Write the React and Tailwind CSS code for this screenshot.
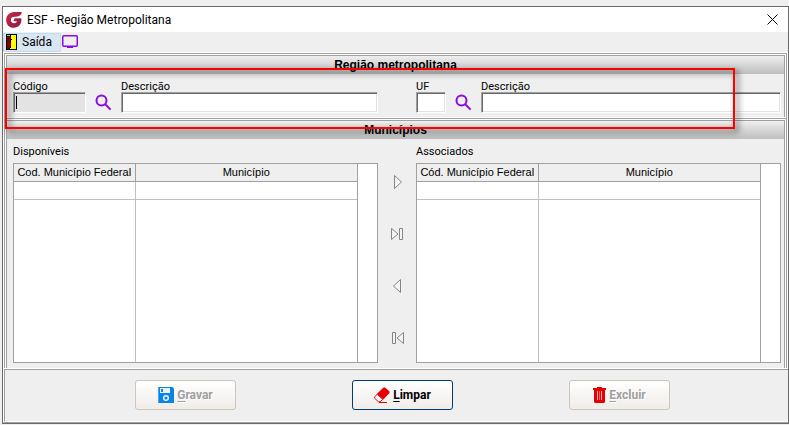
import { useState } from "react";

const fieldClass =
  "h-[21px] min-w-0 border border-t-[#a0a0a0] border-l-[#a0a0a0] border-r-white border-b-white px-1 text-[11px] shadow-[inset_1px_1px_#696969,inset_-1px_-1px_#e3e3e3] outline-none";

const LogoIcon = () => (
  <svg width="16" height="16" viewBox="0 0 16 16" aria-hidden="true">
    <defs>
      <linearGradient id="logo" x1="0" y1="0" x2="1" y2="1">
        <stop offset="0" stopColor="#c8284a" />
        <stop offset="1" stopColor="#8c1a3c" />
      </linearGradient>
    </defs>
    <path
      d="M15.8 0C13 0.1 10 0 8 0.1C3.4 0.3 0.2 3.6 0.2 8C0.2 12.7 3.2 15.8 7.6 15.8C12.4 15.8 15.4 12.6 15.4 7.6V6.2H8.6L7.4 9.2H11C10.6 10.4 9.6 11.2 8 11.2C6.1 11.2 4.9 9.9 4.9 8C4.9 5.8 6.2 4.8 8.6 4.7C12.2 4.6 15.4 4 15.8 0Z"
      fill="url(#logo)"
    />
  </svg>
);

const DoorIcon = () => (
  <svg width="11" height="16" viewBox="0 0 11 16" shapeRendering="crispEdges" aria-hidden="true">
    <path d="M0 0H11V16H0Z" fill="#000" />
    <path d="M5 1H10V15H4V14H5Z" fill="#ff0" />
    <path d="M1 2H4V3H5V12H4V14H3V15H1Z" fill="#800000" />
    <path d="M4 5H6V6H5V9H4Z" fill="#000" />
    <path d="M2 1H4V2H2ZM1 1H2V2H1Z" fill="#0ff" />
  </svg>
);

const MonitorIcon = () => (
  <svg width="16" height="14" viewBox="0 0 16 14" aria-hidden="true">
    <rect x="0.75" y="0.75" width="14.5" height="10.5" rx="1" fill="none" stroke="#8a0be0" strokeWidth="1.5" />
    <path d="M5 11H11V13H5Z" fill="#8a0be0" />
  </svg>
);

const SearchIcon = () => (
  <svg width="17" height="17" viewBox="0 0 17 17" fill="none" stroke="#8a0be0" strokeWidth="2" aria-hidden="true">
    <circle cx="6.5" cy="6.5" r="5" />
    <path d="M10.2 10.2L15.6 15.6" />
  </svg>
);

const SaveIcon = () => (
  <svg width="16" height="16" viewBox="0 0 16 16" aria-hidden="true">
    <path d="M0 0H14.5L16 1.5V16H0Z" fill="#0883e6" />
    <path d="M2 1H12V6H2Z" fill="#e8f3fc" />
    <path d="M3 2H5V5H3Z" fill="#0883e6" />
    <circle cx="8" cy="11" r="2.3" fill="#0883e6" stroke="#e8f3fc" strokeWidth="1.5" />
    <path d="M0.5 0V16" stroke="#4aa6ee" />
  </svg>
);

const EraserIcon = () => (
  <svg width="16" height="16" viewBox="0 0 16 16" aria-hidden="true">
    <path d="M9.5 0.5H11L15.5 4.5V6L9.3 12.4L3 6.7Z" fill="#e60000" />
    <path d="M3.2 7.3L0.7 9.7V11.2L4.4 14.8H6L8.7 12.4Z" fill="#fff" stroke="#e60000" />
    <path d="M5 15.5H13" stroke="#e60000" />
  </svg>
);

const TrashIcon = () => (
  <svg width="13" height="16" viewBox="0 0 13 16" aria-hidden="true">
    <path d="M0 1H4V0H9V1H13V3H12V15L11 16H2L1 15V3H0Z" fill="#e60000" />
    <path d="M4.5 4V13M8.5 4V13" stroke="#f7b5b5" strokeWidth="1" />
    <path d="M6.5 4V13" stroke="#e66060" strokeWidth="1" />
  </svg>
);

const arrows = [
  { label: "Associar", shapes: ["M3.5 1.5V14.5L10.5 8Z"] },
  { label: "Associar todos", shapes: ["M0.5 2.5V13.5L7 8Z", "M8.5 2.5H11.5V13.5H8.5Z"] },
  { label: "Desassociar", shapes: ["M9.5 1.5V14.5L2.5 8Z"] },
  { label: "Desassociar todos", shapes: ["M12.5 2.5V13.5L6 8Z", "M1.5 2.5H4.5V13.5H1.5Z"] },
];

const SectionHeader = ({ children }) => (
  <h2 className="h-[18px] bg-linear-to-b from-[#efefef] to-[#bebebe] text-center font-['Liberation_Sans',sans-serif] text-xs leading-[18px] font-bold">
    {children}
  </h2>
);

const CityTable = ({ caption, codeLabel }) => (
  <section className="flex min-w-0 flex-col">
    <h3 className="h-6 text-[11px] leading-[26px]">{caption}</h3>
    <div className="flex flex-1 border border-[#a0a0a0] bg-white">
      <table
        aria-label={caption}
        className="h-full flex-1 table-fixed border-collapse font-['Liberation_Sans',sans-serif] text-[11px] leading-4"
      >
        <thead>
          <tr className="h-[17px] bg-[#efefef]">
            <th className="w-[121px] border-r border-b border-[#a0a0a0] p-0 font-normal whitespace-nowrap">
              {codeLabel}
            </th>
            <th className="border-b border-[#a0a0a0] p-0 font-normal">Município</th>
          </tr>
        </thead>
        <tbody>
          <tr className="h-[18px]">
            <td className="border-r border-b border-[#c0c0c0] p-0" />
            <td className="border-b border-[#c0c0c0] p-0" />
          </tr>
          <tr>
            <td className="border-r border-[#c0c0c0] p-0" />
            <td className="p-0" />
          </tr>
        </tbody>
      </table>
      <div className="w-5 border-l border-[#a0a0a0]" />
    </div>
  </section>
);

const ActionButton = ({ icon, label, disabled }) => (
  <button
    type="button"
    disabled={disabled}
    className={`flex h-[30px] w-[101px] items-center justify-center gap-[3px] rounded-[3px] border bg-linear-to-b from-white to-[#f0ece8] text-xs font-bold ${
      disabled
        ? "border-[#cbc5ba] text-[#a0a0a0] [text-shadow:1px_1px_#fff]"
        : "border-[#003c74] text-black"
    }`}
  >
    {icon}
    <span>
      <span className="underline underline-offset-2">{label[0]}</span>
      {label.slice(1)}
    </span>
  </button>
);

const App = () => {
  const [form, setForm] = useState({ code: "", name: "", uf: "", ufName: "" });

  const handleChange = (e) => {
    setForm({ ...form, [e.target.name]: e.target.value });
  };

  return (
    <main className="flex h-screen min-h-[425px] flex-col bg-[#efefef] pt-1.5 pb-px pl-0.5 font-[Roboto,sans-serif] text-black">
      <div className="flex flex-1 flex-col border border-[#6b6b6b]">
        <header className="flex h-[25px] items-center bg-white pr-2.5 pl-[3px]">
          <LogoIcon />
          <h1 className="ml-[5px] flex-1 text-xs">ESF - Região Metropolitana</h1>
          <button type="button" aria-label="Fechar">
            <svg width="11" height="11" viewBox="0 0 11 11" stroke="#000" aria-hidden="true">
              <path d="M0.5 0.5L10.5 10.5M10.5 0.5L0.5 10.5" />
            </svg>
          </button>
        </header>

        <nav className="flex h-5 items-center gap-px">
          <button
            type="button"
            className="flex h-[19px] w-[58px] items-center gap-[5px] border border-[#c0dcf3] bg-[#d8e6f2] pl-0.5 text-xs"
          >
            <DoorIcon />
            Saída
          </button>
          <button type="button" aria-label="Tela">
            <MonitorIcon />
          </button>
        </nav>

        <div className="flex flex-1 flex-col border-x border-t border-white">
          <div className="relative flex flex-1 flex-col border-x border-t border-[#a0a0a0]">
            <section className="border-x border-t border-white">
              <div className="border-x border-t border-[#a0a0a0]">
                <SectionHeader>Região metropolitana</SectionHeader>
                <div className="grid h-[43px] grid-cols-2 gap-[38px] pt-1.5 pr-[3px] pl-1.5 text-[11px] leading-[10px]">
                  <div className="flex items-end gap-[9px] pb-1">
                    <div className="relative flex w-[73px] flex-col">
                      <label htmlFor="code">Código</label>
                      <input id="code" name="code" value={form.code} onChange={handleChange} className={`${fieldClass} bg-[#e3e3e3]`} />
                      {/* text cursor */}
                      <span className="absolute bottom-1 left-[3px] h-[13px] w-px bg-black" />
                    </div>
                    <button type="button" aria-label="Pesquisar região" className="pb-0.5">
                      <SearchIcon />
                    </button>
                    <div className="flex min-w-0 flex-1 flex-col">
                      <label htmlFor="name">Descrição</label>
                      <input id="name" name="name" value={form.name} onChange={handleChange} className={`${fieldClass} bg-white`} />
                    </div>
                  </div>
                  <div className="flex items-end gap-[9px] pb-1">
                    <div className="flex w-[30px] flex-col">
                      <label htmlFor="uf">UF</label>
                      <input id="uf" name="uf" value={form.uf} onChange={handleChange} className={`${fieldClass} bg-white`} />
                    </div>
                    <button type="button" aria-label="Pesquisar UF" className="pb-0.5">
                      <SearchIcon />
                    </button>
                    <div className="flex min-w-0 flex-1 flex-col">
                      <label htmlFor="ufName">Descrição</label>
                      <input id="ufName" name="ufName" value={form.ufName} onChange={handleChange} className={`${fieldClass} bg-white`} />
                    </div>
                  </div>
                </div>
              </div>
            </section>

            <section className="flex flex-1 flex-col border-t border-white">
              <div className="flex flex-1 flex-col border-t border-[#a0a0a0]">
                <div className="flex flex-1 flex-col border-x border-t border-white">
                  <div className="flex flex-1 flex-col border-x border-t border-[#a0a0a0]">
                    <SectionHeader>Municípios</SectionHeader>
                    <div className="grid flex-1 grid-cols-[1fr_38px_1fr] pr-[3px] pb-[5px] pl-1.5">
                      <CityTable caption="Disponíveis" codeLabel="Cod. Município Federal" />
                      <div className="flex flex-col items-center gap-9 pt-[35px] pl-0.5">
                        {arrows.map((arrow) => (
                          <button key={arrow.label} type="button" aria-label={arrow.label}>
                            <svg width="14" height="16" viewBox="0 0 14 16" fill="#f4f4f4" stroke="#858585" aria-hidden="true">
                              {arrow.shapes.map((d) => (
                                <path key={d} d={d} />
                              ))}
                            </svg>
                          </button>
                        ))}
                      </div>
                      <CityTable caption="Associados" codeLabel="Cód. Município Federal" />
                    </div>
                  </div>
                </div>
              </div>
            </section>

            {/* Highlighted search area */}
            <div className="pointer-events-none absolute top-3.5 right-[51px] left-0 h-[61px] border-2 border-[#f00] drop-shadow-[3px_3px_3px_rgba(0,0,0,0.75)]" />
          </div>
        </div>

        <footer className="border-t border-b border-l border-t-white border-b-[#a0a0a0] border-l-white">
          <div className="flex h-[53px] items-center justify-center gap-[116px] border-t border-b border-l border-t-[#a0a0a0] border-b-white border-l-[#a0a0a0] pb-px pl-3">
            <ActionButton icon={<SaveIcon />} label="Gravar" disabled />
            <ActionButton icon={<EraserIcon />} label="Limpar" />
            <ActionButton icon={<TrashIcon />} label="Excluir" disabled />
          </div>
        </footer>
      </div>
    </main>
  );
};

export default App;
